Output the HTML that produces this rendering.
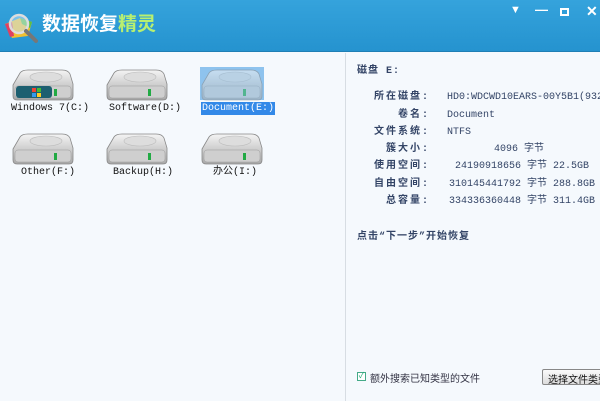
<!DOCTYPE html>
<html><head><meta charset="utf-8"><style>
*{margin:0;padding:0;box-sizing:border-box}
body{width:600px;height:401px;overflow:hidden;background:#f5f9fd;font-family:"Liberation Mono","Noto Sans CJK SC",monospace;position:relative}
.hdr{position:absolute;left:0;top:0;width:600px;height:52px;background:linear-gradient(#35a3dc,#2593cf);border-bottom:1px solid #1f7fb5}
.title{position:absolute;left:42px;top:11px;font:bold 19px "Noto Sans CJK SC",sans-serif;color:#fff;line-height:24px}
.title span{color:#b8f070}
.ctl{position:absolute;top:4px;color:#fff;font:bold 13px "Liberation Sans",sans-serif}
.div{position:absolute;left:345px;top:53px;width:1px;height:348px;background:#d7dde3}
.drv{position:absolute;width:62px;height:32px}
.lbl{position:absolute;font-size:10px;color:#111;white-space:nowrap;line-height:11px}
.r{position:absolute;font-size:10px;color:#334466;white-space:nowrap;line-height:12px}
.k{position:absolute;font-size:10px;color:#334466;white-space:nowrap;text-align:right;width:90px;left:340px;letter-spacing:2px;line-height:12px;font-weight:bold}
</style></head><body>
<div class="hdr">
<svg style="position:absolute;left:2px;top:10px" width="40" height="36" viewBox="0 0 40 36">
<path d="M3 14 L18 8 L30 12 L26 26 L10 28 Z" fill="#f0c030"/>
<path d="M3 14 L10 12 L12 26 L8 27Z" fill="#e04060"/>
<path d="M18 8 L30 12 L28 18 L20 14Z" fill="#60c040"/>
<circle cx="17" cy="14" r="9" fill="rgba(200,230,255,.5)" stroke="#ddd" stroke-width="2.5"/>
<line x1="24" y1="21" x2="34" y2="31" stroke="#777" stroke-width="4" stroke-linecap="round"/>
</svg>
<div class="title">数据恢复<span>精灵</span></div>
<div class="ctl" style="left:510px;font-size:11px">▼</div>
<div class="ctl" style="left:535px;top:2px">—</div>
<div style="position:absolute;left:560px;top:8px;width:9px;height:8px;border:2px solid #fff"></div>
<div class="ctl" style="left:586px;top:3px;font-size:14px">✕</div>
</div>
<div class="div"></div>

<svg width="0" height="0" style="position:absolute"><defs>
<linearGradient id="g" x1="0" y1="0" x2="0" y2="1"><stop offset="0" stop-color="#f4f4f4"/><stop offset="1" stop-color="#a8a8a8"/></linearGradient>
<symbol id="d" viewBox="0 0 62 32"><path d="M8 4 Q10 1 16 1 L50 1 Q56 1 58 5 L61 15 L61 27 Q61 31 57 31 L5 31 Q1 31 1 27 L1 16 Z" fill="url(#g)" stroke="#888" stroke-width=".8"/><ellipse cx="34" cy="8" rx="16" ry="5" fill="#ddd" stroke="#bbb" stroke-width=".6"/><rect x="3" y="17" width="56" height="12" rx="3" fill="#cfcfcf" stroke="#999" stroke-width=".5"/><rect x="42" y="20" width="3" height="7" fill="#2a4"/></symbol>
</defs></svg>

<svg class="drv" style="left:12px;top:69px"><use href="#d"/><rect x="4" y="17" width="36" height="12" rx="3" fill="#1d5f70"/><rect x="20" y="19" width="4" height="4" fill="#e43"/><rect x="25" y="19" width="4" height="4" fill="#4b3"/><rect x="20" y="24" width="4" height="4" fill="#39e"/><rect x="25" y="24" width="4" height="4" fill="#fc2"/></svg>
<div class="lbl" style="left:11px;top:103px">Windows 7(C:)</div>
<svg class="drv" style="left:106px;top:69px"><use href="#d"/></svg>
<div class="lbl" style="left:109px;top:103px">Software(D:)</div>
<div style="position:absolute;left:200px;top:67px;width:64px;height:33px;background:#8ec3ee"></div>
<svg class="drv" style="left:201px;top:69px;opacity:.55"><use href="#d"/></svg>
<div class="lbl" style="left:201px;top:102px;background:#3389e8;color:#fff;padding:1px 1px">Document(E:)</div>
<svg class="drv" style="left:12px;top:133px"><use href="#d"/></svg>
<div class="lbl" style="left:21px;top:167px">Other(F:)</div>
<svg class="drv" style="left:106px;top:133px"><use href="#d"/></svg>
<div class="lbl" style="left:113px;top:167px">Backup(H:)</div>
<svg class="drv" style="left:201px;top:133px"><use href="#d"/></svg>
<div class="lbl" style="left:213px;top:167px">办公(I:)</div>

<div class="r" style="left:357px;top:66px;letter-spacing:1px;font-weight:bold">磁盘 E:</div>
<div class="k" style="top:92px">所在磁盘:</div><div class="r" style="left:447px;top:92px">HD0:WDCWD10EARS-00Y5B1(932GB</div>
<div class="k" style="top:110px">卷名:</div><div class="r" style="left:447px;top:110px">Document</div>
<div class="k" style="top:127px">文件系统:</div><div class="r" style="left:447px;top:127px">NTFS</div>
<div class="k" style="top:144px">簇大小:</div><div class="r" style="left:494px;top:144px">4096 字节</div>
<div class="k" style="top:161px">使用空间:</div><div class="r" style="left:455px;top:161px">24190918656 字节  22.5GB</div>
<div class="k" style="top:179px">自由空间:</div><div class="r" style="left:449px;top:179px">310145441792 字节 288.8GB</div>
<div class="k" style="top:196px">总容量:</div><div class="r" style="left:449px;top:196px">334336360448 字节 311.4GB</div>
<div class="r" style="left:357px;top:232px;letter-spacing:1px;font-weight:bold">点击“下一步”开始恢复</div>

<div style="position:absolute;left:357px;top:372px;width:9px;height:9px;border:1px solid #4a8;background:#fff;font-size:8px;line-height:7px;color:#2a7;text-align:center">✓</div>
<div style="position:absolute;left:370px;top:370px;font:10px 'Noto Sans CJK SC',sans-serif;color:#334">额外搜索已知类型的文件</div>
<div style="position:absolute;left:542px;top:369px;width:70px;height:16px;border:1px solid #888;border-radius:2px;background:linear-gradient(#fafafa,#ddd);font:10px 'Noto Sans CJK SC',sans-serif;color:#111;padding:1px 0 0 5px;white-space:nowrap;overflow:hidden">选择文件类型</div>
</body></html>
